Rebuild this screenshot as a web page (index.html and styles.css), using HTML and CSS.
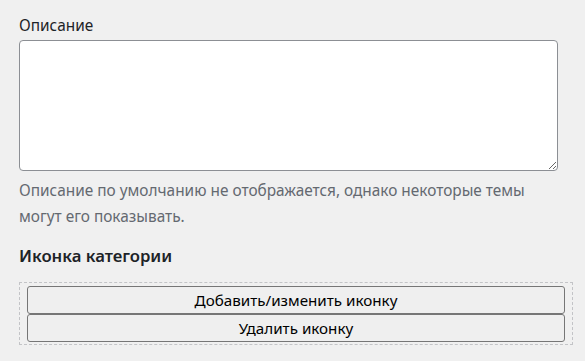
FILE: index.html
```html
<!DOCTYPE html>
<html lang="ru">
<head>
  <meta charset="UTF-8">
  <meta name="viewport" content="width=device-width, initial-scale=1.0">
  <title>Категория</title>
  <link rel="stylesheet" href="styles.css">
</head>
<body>
  <div class="field">
    <label for="description">Описание</label>
    <textarea id="description" rows="5"></textarea>
    <p class="hint">Описание по умолчанию не отображается, однако некоторые темы могут его показывать.</p>
  </div>

  <div class="field">
    <h3>Иконка категории</h3>
    <div class="icon-box">
      <button class="btn">Добавить/изменить иконку</button>
      <button class="btn">Удалить иконку</button>
    </div>
  </div>
</body>
</html>
```

FILE: styles.css
```css
* {
  box-sizing: border-box;
  margin: 0;
  padding: 0;
}
body {
  background: #f0f0f0;
  color: #1d2327;
  font-family: 'Noto Sans', 'Open Sans', sans-serif;
  font-size: 15.4px;
  padding: 16px 27px 0 19px;
}

label {
  display: block;
  line-height: 20px;
  margin-bottom: 4px;
}

textarea {
  display: block;
  width: 539px;
  height: 131px;
  border: 1px solid #8c8f94;
  border-radius: 4px;
  background: #fff;
  resize: vertical;
}

.hint {
  color: #646970;
  line-height: 26px;
  margin-top: 7px;
  width: 530px;
}

h3 {
  font-size: 16.7px;
  font-weight: 600;
  line-height: 22px;
  margin-top: 15px;
  margin-bottom: 15px;
}

.icon-box {
  width: 554px;
  border: 1px dashed #c3c4c7;
  padding: 3px 7px 2px;
}

.btn {
  display: block;
  width: 100%;
  height: 28px;
  background: #efefef;
  border: 1px solid #767676;
  border-radius: 3px;
  font-family: inherit;
  font-size: 15.2px;
  color: #000;
}
```
